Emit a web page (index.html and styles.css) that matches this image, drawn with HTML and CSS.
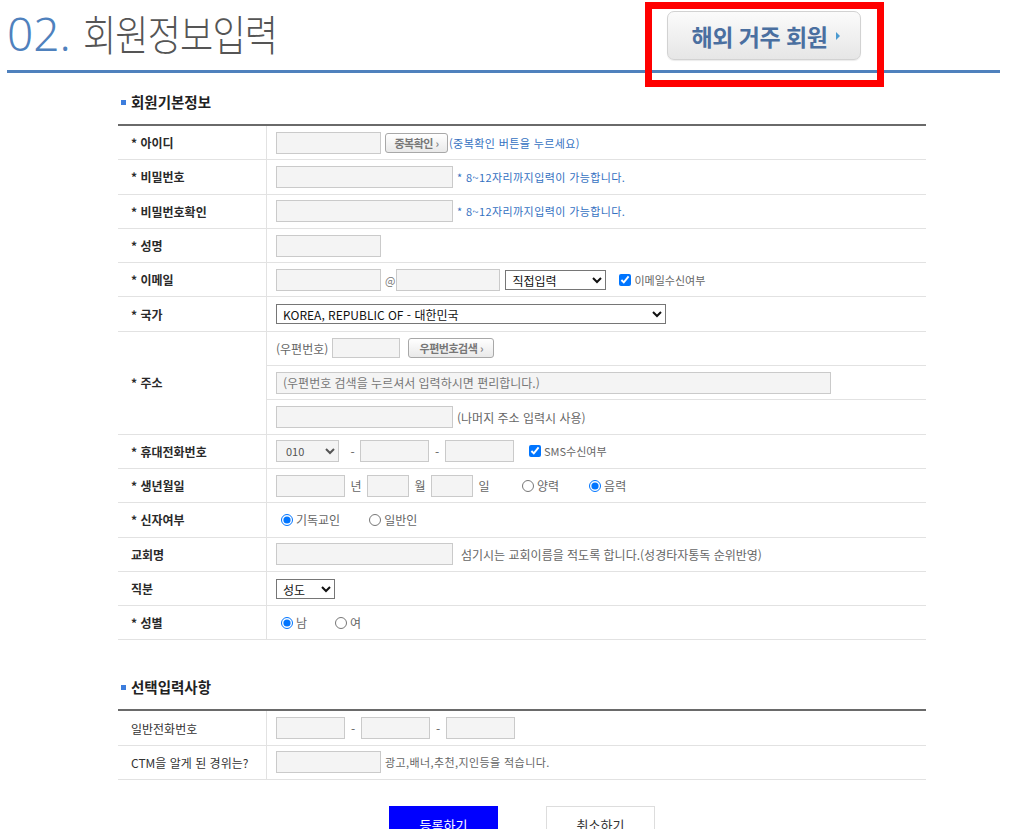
FILE: index.html
```html
<!DOCTYPE html>
<html lang="ko">
<head>
    <meta charset="UTF-8">
    <title>회원정보입력</title>
    <link rel="stylesheet" href="styles.css">
</head>
<body>
<div class="page">
    <div class="head">
        <h1 class="page-title"><span class="num">02.</span><span class="ko">회원정보입력</span></h1>
        <div class="overseas">
            <a class="overseas-btn" href="#">해외 거주 회원<span class="arr"></span></a>
        </div>
    </div>

    <div class="form-wrap">
        <h3 class="sec-title">회원기본정보</h3>
        <table class="form-table strong">
            <tr>
                <th>* 아이디</th>
                <td><div class="fld">
                    <input class="inp w105">
                    <button class="btn-s ml4 w63">중복확인 <span class="gt">›</span></button>
                    <span class="hint blue ml1">(중복확인 버튼을 누르세요)</span>
                </div></td>
            </tr>
            <tr>
                <th>* 비밀번호</th>
                <td><div class="fld">
                    <input class="inp w177" type="password">
                    <span class="hint blue ml4">* 8~12자리까지입력이 가능합니다.</span>
                </div></td>
            </tr>
            <tr>
                <th>* 비밀번호확인</th>
                <td><div class="fld">
                    <input class="inp w177" type="password">
                    <span class="hint blue ml4">* 8~12자리까지입력이 가능합니다.</span>
                </div></td>
            </tr>
            <tr>
                <th>* 성명</th>
                <td><div class="fld"><input class="inp w105"></div></td>
            </tr>
            <tr>
                <th>* 이메일</th>
                <td><div class="fld">
                    <input class="inp w105">
                    <span class="at">@</span>
                    <input class="inp w104">
                    <select class="sel w101 ml5"><option>직접입력</option></select>
                    <input type="checkbox" class="chk ml13" checked>
                    <span class="hint gray">이메일수신여부</span>
                </div></td>
            </tr>
            <tr>
                <th>* 국가</th>
                <td><div class="fld">
                    <select class="sel w390"><option>KOREA, REPUBLIC OF - 대한민국</option></select>
                </div></td>
            </tr>
            <tr>
                <th rowspan="3">* 주소</th>
                <td><div class="fld">
                    <span class="note">(우편번호)</span>
                    <input class="inp w68 ml4 h20">
                    <button class="btn-s ml8 w86">우편번호검색 <span class="gt">›</span></button>
                </div></td>
            </tr>
            <tr>
                <td><div class="fld">
                    <input class="inp w555" placeholder="(우편번호 검색을 누르셔서 입력하시면 편리합니다.)">
                </div></td>
            </tr>
            <tr>
                <td><div class="fld">
                    <input class="inp w177">
                    <span class="note ml4">(나머지 주소 입력시 사용)</span>
                </div></td>
            </tr>
            <tr>
                <th>* 휴대전화번호</th>
                <td><div class="fld">
                    <select class="sel sel-gray w63"><option>010</option></select>
                    <span class="dash dash-w">-</span>
                    <input class="inp w69">
                    <span class="dash">-</span>
                    <input class="inp w69">
                    <input type="checkbox" class="chk ml15" checked>
                    <span class="hint gray">SMS수신여부</span>
                </div></td>
            </tr>
            <tr>
                <th>* 생년월일</th>
                <td><div class="fld">
                    <input class="inp w69">
                    <span class="unit">년</span>
                    <input class="inp w42">
                    <span class="unit">월</span>
                    <input class="inp w42">
                    <span class="unit">일</span>
                    <label class="opt ml22"><input type="radio" name="cal">양력</label>
                    <label class="opt ml25"><input type="radio" name="cal" checked>음력</label>
                </div></td>
            </tr>
            <tr>
                <th>* 신자여부</th>
                <td><div class="fld">
                    <label class="opt"><input type="radio" name="faith" checked>기독교인</label>
                    <label class="opt ml24"><input type="radio" name="faith">일반인</label>
                </div></td>
            </tr>
            <tr>
                <th>교회명</th>
                <td><div class="fld">
                    <input class="inp w177">
                    <span class="note ml8">섬기시는 교회이름을 적도록 합니다.(성경타자통독 순위반영)</span>
                </div></td>
            </tr>
            <tr>
                <th>직분</th>
                <td><div class="fld">
                    <select class="sel w59"><option>성도</option></select>
                </div></td>
            </tr>
            <tr>
                <th>* 성별</th>
                <td><div class="fld">
                    <label class="opt"><input type="radio" name="sex" checked>남</label>
                    <label class="opt ml23"><input type="radio" name="sex">여</label>
                </div></td>
            </tr>
        </table>

        <h3 class="sec-title sec-2">선택입력사항</h3>
        <table class="form-table">
            <tr>
                <th>일반전화번호</th>
                <td><div class="fld">
                    <input class="inp w69">
                    <span class="dash">-</span>
                    <input class="inp w69">
                    <span class="dash">-</span>
                    <input class="inp w69">
                </div></td>
            </tr>
            <tr>
                <th>CTM을 알게 된 경위는?</th>
                <td><div class="fld">
                    <input class="inp w105">
                    <span class="hint gray ml4 wide">광고,배너,추천,지인등을 적습니다.</span>
                </div></td>
            </tr>
        </table>

        <div class="actions">
            <button class="btn-big btn-ok">등록하기</button>
            <button class="btn-big btn-cancel">취소하기</button>
        </div>
    </div>
</div>
</body>
</html>
```

FILE: styles.css
```css
body {
    margin: 0;
    font-family: "Noto Sans CJK KR", "Noto Sans", sans-serif;
    font-size: 12px;
    color: #333;
}

.page {
    padding: 0 36px 0 7px;
}

/* title bar */
.head {
    display: flex;
    justify-content: space-between;
    align-items: flex-start;
    height: 70px;
    border-bottom: 3px solid #4f81bd;
}

.page-title {
    display: flex;
    align-items: baseline;
    margin: 6px 0 0;
    font-weight: 300;
    line-height: 54px;
    white-space: nowrap;
}

.page-title .num {
    font-family: "Noto Sans", sans-serif;
    font-size: 46px;
    color: #4f81bd;
    margin-right: 12px;
}

.page-title .ko {
    display: inline-block;
    font-size: 42px;
    color: #555;
    letter-spacing: -1px;
    transform: scaleX(0.86);
    transform-origin: left center;
}

.overseas {
    position: relative;
    margin: 11px 139px 0 0;
}

.overseas::after {
    content: "";
    position: absolute;
    left: -22px;
    top: -9px;
    width: 239px;
    height: 85px;
    border: 7px solid #f00;
    box-sizing: border-box;
}

.overseas-btn {
    display: flex;
    align-items: center;
    justify-content: center;
    width: 194px;
    height: 49px;
    box-sizing: border-box;
    padding-left: 4px;
    border: 1px solid #d2d2d2;
    border-radius: 7px;
    background: linear-gradient(#fbfbfb, #e6e6e6);
    box-shadow: 0 1px 1px rgba(0, 0, 0, 0.08);
    color: #4a6fa0;
    font-size: 23px;
    font-weight: 700;
    text-decoration: none;
    letter-spacing: -0.5px;
}

.overseas-btn .arr {
    width: 0;
    height: 0;
    margin-left: 9px;
    border-left: 4px solid #4a9ad0;
    border-top: 4px solid transparent;
    border-bottom: 4px solid transparent;
}

/* form */
.form-wrap {
    width: 808px;
    margin-left: 111px;
}

.sec-title {
    position: relative;
    margin: 19px 0 12px;
    padding-left: 13px;
    font-size: 14.5px;
    line-height: 20px;
    font-weight: 700;
    color: #222;
}

.sec-title::before {
    content: "";
    position: absolute;
    left: 3px;
    top: 8px;
    width: 5px;
    height: 5px;
    background: #3c7ddd;
}

.sec-2 {
    margin-top: 37px;
}

.form-table {
    width: 100%;
    border-collapse: collapse;
    border-top: 2px solid #6a6a6a;
}

.form-table th {
    width: 135px;
    height: 33.3px;
    padding: 0 0 0 13px;
    text-align: left;
    font-weight: 400;
    color: #333;
    border-bottom: 1px solid #e2e2e2;
    border-right: 1px solid #e2e2e2;
}

.form-table.strong th {
    font-weight: 700;
    color: #2a2a2a;
}

.form-table td {
    height: 33.3px;
    padding: 0 0 0 9px;
    border-bottom: 1px solid #e2e2e2;
}

.fld {
    display: flex;
    align-items: center;
    white-space: nowrap;
}

.inp {
    height: 22px;
    box-sizing: border-box;
    margin: 0;
    padding: 0 6px;
    border: 1px solid #cacaca;
    background: #f4f4f4;
    font-family: inherit;
    font-size: 12px;
}

.inp::placeholder {
    color: #777;
}

.h20 { height: 20px; }

.sel {
    height: 20px;
    margin: 0;
    padding: 0 2px;
    border: 1px solid #767676;
    border-radius: 0;
    background: #fff;
    color: #111;
    font-family: inherit;
    font-size: 12px;
}

.sel-gray {
    height: 22px;
    border-color: #cacaca;
    background: #f4f4f4;
    color: #555;
    font-size: 11px;
    padding-left: 5px;
}

.btn-s {
    height: 20px;
    margin: 0;
    padding: 0 6px;
    border: 1px solid #a8a8a8;
    border-radius: 3px;
    background: linear-gradient(#fff, #e9e9e9);
    color: #777;
    font-family: inherit;
    font-size: 11px;
    font-weight: 700;
    letter-spacing: -0.5px;
}

.btn-s .gt {
    color: #888;
    font-weight: 700;
}

.hint {
    font-size: 11px;
    letter-spacing: 0.4px;
}

.hint.gray {
    letter-spacing: 0;
}

.hint.wide {
    letter-spacing: 0.4px;
}

.note {
    font-size: 12px;
    color: #666;
}

.blue { color: #3471c1; }
.gray { color: #666; }

.at {
    margin: 0 1px 0 4px;
    color: #777;
    font-size: 11px;
}

.dash {
    width: 16px;
    text-align: center;
    color: #666;
}

.dash-w {
    width: 21px;
    padding-left: 6px;
    box-sizing: border-box;
}

.unit {
    width: 22px;
    text-align: center;
    color: #666;
}

.chk {
    margin: 0 3px 0 0;
    width: 12px;
    height: 12px;
}

.opt {
    display: flex;
    align-items: center;
    color: #666;
}

.opt input {
    margin: 0 3px 0 5px;
    width: 12px;
    height: 12px;
}

.w42 { width: 42px; }
.w59 { width: 59px; }
.w63 { width: 63px; }
.w68 { width: 68px; }
.w69 { width: 69px; }
.w86 { width: 86px; }
.w101 { width: 101px; }
.w104 { width: 104px; }
.w105 { width: 105px; }
.w177 { width: 177px; }
.w390 { width: 390px; }
.w555 { width: 555px; }

.ml1 { margin-left: 1px; }
.ml4 { margin-left: 4px; }
.ml5 { margin-left: 5px; }
.ml8 { margin-left: 8px; }
.ml13 { margin-left: 13px; }
.ml15 { margin-left: 15px; }
.ml22 { margin-left: 22px; }
.ml23 { margin-left: 23px; }
.ml24 { margin-left: 24px; }
.ml25 { margin-left: 25px; }

.actions {
    display: flex;
    justify-content: center;
    gap: 48px;
    margin-top: 26px;
}

.btn-big {
    width: 109px;
    height: 36px;
    font-family: inherit;
    font-size: 13px;
}

.btn-ok {
    border: 0;
    background: #0000ff;
    color: #fff;
}

.btn-cancel {
    border: 1px solid #ddd;
    background: #fff;
    color: #333;
}
```
